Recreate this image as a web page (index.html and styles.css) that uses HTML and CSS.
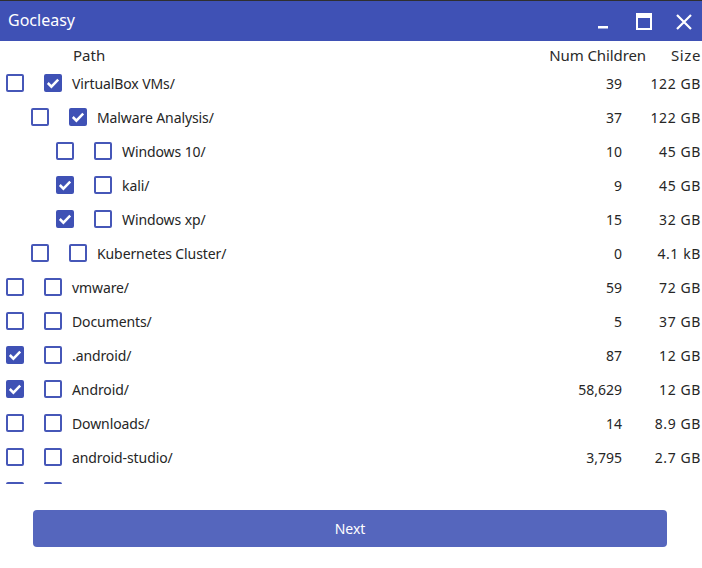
FILE: index.html
```html
<!DOCTYPE html>
<html>
<head>
<meta charset="utf-8">
<link rel="stylesheet" href="styles.css">
</head>
<body>
<div class="window">
  <div class="titlebar">
    <span class="title">Gocleasy</span>
    <div class="controls">
      <svg class="ctl" width="40" height="40" viewBox="0 0 40 40"><rect x="16" y="25" width="10" height="2.5" fill="#fff"/></svg>
      <svg class="ctl" width="40" height="40" viewBox="0 0 40 40"><rect x="15" y="13" width="14" height="15" fill="none" stroke="#fff" stroke-width="2"/><rect x="15" y="13" width="14" height="4" fill="#fff"/></svg>
      <svg class="ctl" width="40" height="40" viewBox="0 0 40 40"><path d="M15 14 L29 28 M29 14 L15 28" stroke="#fff" stroke-width="2.2" fill="none"/></svg>
    </div>
  </div>
  <div class="header">
    <span class="h-path">Path</span>
    <span class="h-num">Num Children</span>
    <span class="h-size">Size</span>
  </div>
  <div class="list" id="list"></div>
  <div class="footer">
    <button class="next">Next</button>
  </div>
</div>
<script src="app.js"></script>
</body>
</html>
```

FILE: app.js
```js
const rows = [
  [0, false, true, "VirtualBox VMs/", "39", "122 GB"],
  [1, false, true, "Malware Analysis/", "37", "122 GB"],
  [2, false, false, "Windows 10/", "10", "45 GB"],
  [2, true, false, "kali/", "9", "45 GB"],
  [2, true, false, "Windows xp/", "15", "32 GB"],
  [1, false, false, "Kubernetes Cluster/", "0", "4.1 kB"],
  [0, false, false, "vmware/", "59", "72 GB"],
  [0, false, false, "Documents/", "5", "37 GB"],
  [0, true, false, ".android/", "87", "12 GB"],
  [0, true, false, "Android/", "58,629", "12 GB"],
  [0, false, false, "Downloads/", "14", "8.9 GB"],
  [0, false, false, "android-studio/", "3,795", "2.7 GB"],
  [0, false, false, "", "", ""]
];
const check = '<svg viewBox="0 0 18 18" width="18" height="18"><path d="M3.8 9 L7.4 12.6 L14.2 5.6" fill="none" stroke="#fff" stroke-width="2.5"/></svg>';
const list = document.getElementById('list');
for (const [lvl, a, b, name, num, size] of rows) {
  const r = document.createElement('div');
  r.className = 'row';
  r.innerHTML =
    '<span class="indent" style="width:' + (lvl * 25) + 'px"></span>' +
    '<span class="cb cb1' + (a ? ' on' : '') + '">' + (a ? check : '') + '</span>' +
    '<span class="cb cb2' + (b ? ' on' : '') + '">' + (b ? check : '') + '</span>' +
    '<span class="name">' + name + '</span>' +
    '<span class="num">' + num + '</span>' +
    '<span class="size">' + size + '</span>';
  list.appendChild(r);
}
```

FILE: styles.css
```css
* { box-sizing: border-box; }
html, body { margin: 0; padding: 0; background: #fff; }
body {
  font-family: "Noto Sans", "Open Sans", sans-serif;
  color: #262626;
  width: 702px;
  height: 568px;
  overflow: hidden;
}
.titlebar {
  height: 41px;
  background: #3f51b5;
  border-top: 1px solid #2f2f2f;
  display: flex;
  align-items: center;
  justify-content: space-between;
}
.title {
  color: #fff;
  font-size: 16px;
  padding-left: 8px;
  padding-bottom: 2px;
}
.controls { display: flex; align-items: center; height: 40px; margin-top: -1px; }
.ctl { display: block; }
.header {
  height: 24px;
  display: flex;
  align-items: flex-end;
  font-size: 15px;
  color: #2a2a2a;
}
.h-path { padding-left: 73px; flex: 1; }
.h-num { width: 100px; text-align: right; letter-spacing: -0.1px; }
.h-size { width: 56px; text-align: right; padding-right: 1px; letter-spacing: 0.6px; }
.list {
  height: 418px;
  margin-top: 1px;
  overflow: hidden;
}
.row {
  height: 34px;
  display: flex;
  align-items: center;
  font-size: 14px;
}
.indent { flex: none; }
.cb {
  flex: none;
  width: 18px;
  height: 18px;
  border: 2px solid #4657b8;
  border-radius: 2px;
  display: flex;
  align-items: center;
  justify-content: center;
}
.cb svg { flex: none; }
.cb.on { background: #3f51b5; border-color: #3f51b5; }
.cb1 { margin-left: 6px; }
.cb2 { margin-left: 20px; }
.name { margin-left: 10px; flex: 1; white-space: nowrap; letter-spacing: -0.1px; }
.num { width: 80px; text-align: right; padding-right: 1px; }
.size { width: 79px; text-align: right; padding-right: 1px; letter-spacing: 0.6px; }
.footer {
  padding: 26px 35px 0 33px;
}
.next {
  display: block;
  width: 634px;
  height: 37px;
  background: #5566bd;
  color: #fff;
  border: none;
  border-radius: 4px;
  font-family: "Noto Sans", "Open Sans", sans-serif;
  font-size: 14px;
}
```
